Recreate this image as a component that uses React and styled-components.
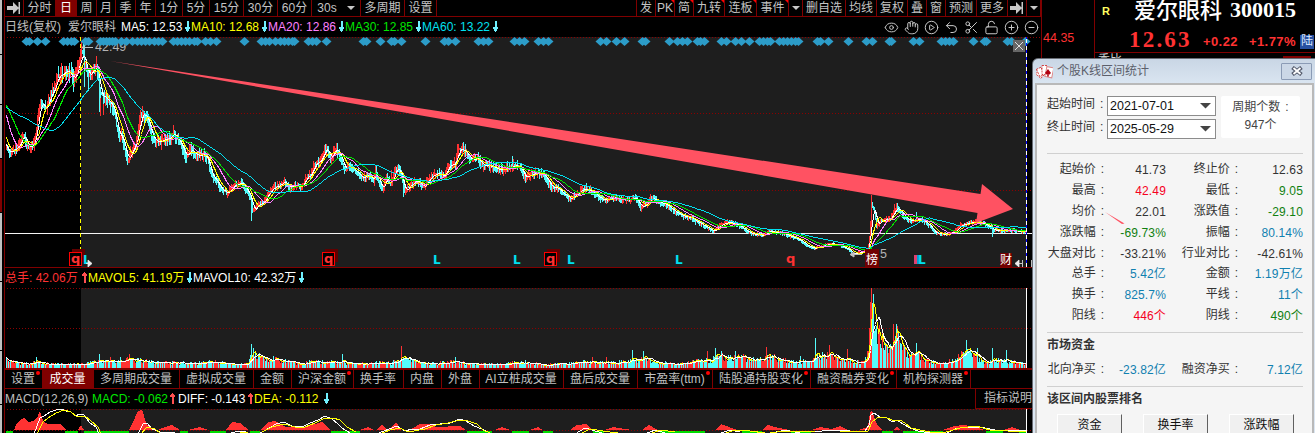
import React from "react";
import styled, {createGlobalStyle} from "styled-components";
import {Eye, Hand, CirclePlay, Undo2, Scissors, LockOpen, CirclePlus, CircleMinus} from "lucide-react";

const GlobalStyle = createGlobalStyle`
* { box-sizing: border-box; }
body {
margin: 0;
background: #000;
font-family: "Liberation Sans", "Noto Sans CJK SC", sans-serif;
font-size: 12px;
overflow: hidden;
}
svg { display: block; flex: none; }
`

const Page = styled.div`
position: relative;
display: flex;
width: 1315px;
height: 433px;
overflow: hidden;
background: #000;
white-space: nowrap;
`

const SideStrip = styled.div`
display: flex;
flex-direction: column;
gap: 1px;
width: 4px;
border-right: 2px solid #000;
`

const SideTab = styled.div`
flex: none;
height: ${props => props.h}px;
background: ${props => props.active ? '#800000' : '#c0c0c0'};
`

const ChartColumn = styled.div`
width: 1038px;
border-left: 1px solid #800000;
border-right: 1px solid #800000;
`

const Toolbar = styled.div`
display: flex;
justify-content: space-between;
height: 17px;
border-bottom: 1px solid #800000;
`

const ToolGroup = styled.div`
display: flex;
`

const ToolButton = styled.div`
position: relative;
display: flex;
align-items: center;
justify-content: center;
width: ${props => props.w}px;
height: 16px;
padding-bottom: 1px;
line-height: 14px;
color: ${props => props.active ? '#fff' : '#c4c4c4'};
background: ${props => props.active ? '#800000' : 'transparent'};
border-right: 1px solid #800000;
&:after {
content: "";
display: ${props => props.mark ? 'block' : 'none'};
position: absolute;
top: 0;
right: 0;
border-top: 3px solid #f00;
border-left: 3px solid transparent;
}
`

const InfoRow = styled.div`
display: flex;
align-items: center;
height: ${props => props.h || 20}px;
color: #c0c0c0;
`

const InfoItem = styled.div`
display: flex;
align-items: center;
flex: none;
width: ${props => props.w}px;
height: 16px;
line-height: 16px;
color: ${props => props.color || '#c0c0c0'};
`

const ArrowSlot = styled.span`
margin-left: auto;
padding-right: ${props => props.gap || 0}px;
`

const IconTools = styled.div`
display: flex;
gap: 5px;
margin-left: auto;
margin-right: 2px;
color: #c8c8c8;
`

const VolumeHead = styled(InfoRow)`
border-top: 1px solid #800000;
`

const IndicatorTabs = styled.div`
display: flex;
height: 21px;
border-top: 2px solid #800000;
border-bottom: 1px solid #800000;
`

const IndicatorTab = styled.div`
position: relative;
display: flex;
align-items: center;
justify-content: center;
width: ${props => props.w}px;
padding-right: 1px;
line-height: 14px;
color: ${props => props.active ? '#fff' : '#c0c0c0'};
background: ${props => props.active ? '#800000' : 'transparent'};
border-right: 1px solid #800000;
&:after {
content: "";
display: ${props => props.dot ? 'block' : 'none'};
position: absolute;
top: 1px;
right: 2px;
width: 4px;
height: 4px;
border-radius: 2px;
background: #f00;
}
`

const HelpButton = styled.div`
width: 66px;
height: 20px;
margin-left: auto;
padding-left: 8px;
line-height: 19px;
border-left: 1px solid #800000;
border-bottom: 1px solid #800000;
`

const PriceAxis = styled.div`
width: 52px;
padding: 31px 0 0 1px;
font-size: 12.5px;
line-height: 14px;
color: #ff3232;
`

const QuotePanel = styled.div`
display: flex;
flex-direction: column;
width: 221px;
border-left: 1px solid #800000;
`

const QuoteTitle = styled.div`
display: flex;
align-items: center;
height: 22px;
padding-left: 7px;
color: #fff;
`

const Flag = styled.span`
width: 32px;
color: #ffff60;
font-size: 11px;
font-weight: bold;
`

const StockName = styled.span`
width: 96px;
font-size: 22px;
font-weight: 500;
line-height: 22px;
`

const StockCode = styled.span`
padding-bottom: 2px;
font: bold 22px/20px "Liberation Serif", serif;
`

const QuoteLine = styled.div`
display: flex;
align-items: center;
height: 31px;
padding: 6px 0 0 34px;
color: #ff3232;
border-bottom: 1px solid #800000;
`

const LastPrice = styled.span`
width: 74px;
font: bold 23px/24px "Liberation Serif", serif;
letter-spacing: 2.2px;
`

const Change = styled.span`
width: ${props => props.w}px;
padding-top: 3px;
font-size: 13px;
font-weight: bold;
letter-spacing: 0.4px;
`

const MarketTag = styled.span`
width: 14px;
height: 14px;
margin-top: 3px;
font-size: 12px;
line-height: 13px;
text-align: center;
color: #dce8ff;
background: #2850a0;
`

const QuoteRow = styled.div`
display: flex;
justify-content: space-between;
align-items: flex-start;
height: 8px;
overflow: hidden;
padding: 0 4px 0 3px;
color: #d0d0d0;
line-height: 14px;
`

const RedBlock = styled.div`
width: 28px;
height: 18px;
margin-top: 3px;
background: #800000;
`

const Dialog = styled.div`
position: absolute;
left: 1032px;
top: 58px;
width: 285px;
height: 380px;
padding: 0 2px 0 2px;
border: 1px solid #686c74;
border-radius: 6px 0 0 0;
background: linear-gradient(#c9d6e5, #dbe6f2 26px, #dbe6f2);
color: #333;
`

const DialogTitle = styled.div`
display: flex;
align-items: center;
height: 24px;
padding-left: 1px;
color: #5c5f6b;
`

const TitleText = styled.span`
margin-left: 4px;
line-height: 16px;
`

const CloseButton = styled.div`
display: flex;
align-items: center;
justify-content: center;
width: 31px;
height: 17px;
margin-left: auto;
margin-right: 2px;
border: 1px solid #8b9bb5;
border-radius: 1px;
background: #cbd7e6;
`

const DialogBody = styled.div`
height: 360px;
width: 279px;
padding: 10px 0 0 10px;
border: 2px solid #b9b9b9;
border-bottom: 0;
background: #f5f5f5;
`

const Section = styled.div`
width: 256px;
height: ${props => props.h}px;
border-bottom: 1px solid #d0d0d0;
`

const PeriodSection = styled(Section)`
display: flex;
align-items: flex-start;
padding-top: 1px;
`

const DateRows = styled.div`
display: flex;
flex-direction: column;
gap: 4px;
`

const DateRow = styled.div`
display: flex;
align-items: center;
height: 19px;
`

const DateLabel = styled.span`
width: 60px;
height: 19px;
line-height: 17px;
`

const DateSelect = styled.div`
display: flex;
align-items: center;
justify-content: space-between;
width: 109px;
height: 20px;
padding: 1px 4px 0 2px;
font-size: 12.5px;
color: #111;
background: #fff;
border: 1px solid #8c8c8c;
`

const PeriodCount = styled.div`
width: 79px;
height: 42px;
margin-left: 5px;
padding-top: 2px;
text-align: center;
line-height: 18px;
color: #444;
background: #fff;
border-radius: 2px;
`

const Colon = styled.span`
margin-left: ${props => props.gap || 5}px;
`

const StatGrid = styled.div`
display: grid;
grid-template-columns: 59px 60px 74px 63px;
grid-auto-rows: 20.9px;
padding-top: ${props => props.top || 0}px;
text-align: right;
`

const StatLabel = styled.span`
padding-right: 2px;
line-height: 17px;
color: #333;
`

const StatValue = styled.span`
line-height: 19px;
letter-spacing: 0.15px;
color: ${props => props.color || '#333'};
`

const SectionTitle = styled.div`
padding-top: ${props => props.top}px;
line-height: 16px;
font-weight: bold;
color: #333;
`

const RankButtons = styled.div`
display: flex;
gap: 21px;
padding: 7px 0 0 10px;
`

const RankButton = styled.div`
width: 65px;
height: 26px;
line-height: 20px;
text-align: center;
color: #111;
background: #f0f0f0;
border-top: 1px solid #fff;
border-left: 1px solid #fff;
border-right: 1px solid #606060;
`

const UP = '#ff3232';
const DOWN = '#54fcfc';

// [x, y] anchors of the closing price, one bar per pixel
const closeAnchors = [
    [-60, 110], [-30, 112], [-22, 86], [-12, 76], [-6, 105], [0, 135], [6, 149], [10, 152], [13, 149], [17, 146], [20, 142], [23, 133],
    [26, 146], [30, 146], [33, 143], [36, 128], [38, 112], [40, 100], [43, 108], [46, 106], [50, 93], [54, 88],
    [57, 76], [62, 74], [66, 68], [70, 74], [73, 80], [76, 72], [80, 55], [82, 53], [85, 66], [88, 75], [92, 69],
    [97, 67], [99, 92], [103, 97], [107, 100], [112, 106], [115, 117], [118, 137], [121, 134], [127, 161], [130, 152],
    [135, 145], [138, 130], [140, 114], [143, 114], [147, 118], [150, 132], [155, 140], [160, 142], [165, 138],
    [170, 137], [173, 133], [178, 139], [182, 148], [185, 157], [190, 149], [195, 155], [203, 154], [207, 158],
    [210, 172], [215, 180], [220, 188], [227, 193], [232, 186], [240, 182], [245, 188], [250, 197], [252, 210],
    [254, 208], [258, 204], [263, 202], [268, 192], [273, 187], [280, 184], [284, 181], [288, 187], [295, 185],
    [300, 187], [305, 178], [310, 175], [314, 163], [320, 161], [324, 148], [327, 150], [330, 158], [335, 148],
    [338, 151], [341, 160], [344, 168], [350, 166], [355, 172], [362, 177], [368, 174], [373, 180], [375, 170],
    [378, 182], [382, 189], [386, 176], [390, 184], [395, 168], [399, 169], [402, 182], [404, 191], [410, 184],
    [416, 180], [423, 187], [430, 176], [438, 173], [443, 176], [448, 165], [455, 162], [457, 151], [462, 149],
    [466, 153], [470, 158], [477, 158], [482, 165], [490, 166], [498, 169], [505, 168], [513, 165], [520, 166],
    [523, 177], [530, 174], [540, 172], [545, 177], [550, 186], [558, 188], [563, 194], [570, 198], [577, 193],
    [583, 188], [590, 190], [600, 198], [605, 200], [612, 197], [620, 199], [630, 200], [635, 196], [640, 207],
    [645, 205], [650, 198], [660, 202], [668, 206], [675, 212], [683, 216], [690, 217], [697, 222], [705, 226],
    [713, 231], [720, 224], [727, 222], [735, 223], [740, 226], [748, 232], [755, 234], [763, 235], [768, 231],
    [780, 232], [790, 236], [800, 240], [808, 246], [814, 248], [820, 246], [830, 243], [840, 245], [848, 249],
    [852, 254], [860, 252], [867, 249], [869, 238], [871, 205], [874, 211], [876, 226], [880, 220], [885, 219],
    [890, 218], [894, 209], [897, 207], [900, 211], [905, 218], [912, 221], [917, 219], [922, 220], [930, 226],
    [935, 233], [945, 234], [953, 232], [960, 225], [967, 223], [975, 221], [983, 223], [990, 227], [993, 230],
    [1000, 230], [1010, 230], [1018, 231], [1026, 232],
];

const volumeAnchors = [
    [6, 8], [12, 6], [20, 5], [30, 4], [36, 7], [45, 4], [80, 4], [90, 5], [100, 7], [115, 6], [127, 10], [140, 7],
    [165, 5], [185, 5], [205, 5], [215, 7], [228, 4], [248, 5], [252, 15], [262, 10], [285, 7], [300, 4], [310, 6],
    [350, 5], [390, 5], [403, 9], [415, 7], [425, 4], [450, 6], [475, 4], [500, 4], [525, 6], [545, 3], [570, 5],
    [590, 6], [610, 5], [630, 7], [645, 9], [660, 5], [680, 4], [690, 7], [712, 8], [717, 16], [725, 9], [740, 11],
    [755, 7], [768, 12], [785, 7], [795, 6], [810, 7], [818, 13], [828, 12], [840, 8], [848, 7], [860, 6], [866, 8],
    [868, 22], [871, 70], [873, 56], [876, 34], [881, 30], [886, 21], [891, 20], [896, 36], [902, 20], [910, 12],
    [918, 12], [930, 6], [945, 5], [955, 9], [965, 14], [972, 13], [982, 6], [1000, 7], [1012, 6], [1026, 4],
];

const volumeSpikes = {
    36: 11, 99: 14, 110: 11, 129: 14, 251: 24, 253: 20, 342: 14, 401: 22, 455: 11, 592: 11, 606: 11, 632: 18,
    643: 17, 707: 17, 715: 20, 735: 17, 766: 21, 800: 12, 815: 30, 829: 23, 847: 19, 870: 66, 871: 80, 872: 65,
    893: 44, 896: 44, 899: 28, 916: 25, 966: 28, 977: 20, 992: 20, 1006: 18,
};

function createRandom(seed) {
    let state = seed;
    return () => {
        state = (state * 1664525 + 1013904223) % 4294967296;
        return state / 4294967296;
    };
}

function sample(anchors, x) {
    for (let i = 1; i < anchors.length; i++) {
        const [x1, y1] = anchors[i - 1];
        const [x2, y2] = anchors[i];
        if (x <= x2) return y1 + (y2 - y1) * Math.max(0, x - x1) / (x2 - x1);
    }
    return anchors[anchors.length - 1][1];
}

function average(values, index, size) {
    const part = values.slice(Math.max(0, index - size + 1), index + 1);
    return part.reduce((a, b) => a + b, 0) / part.length;
}

function toPath(points) {
    return "M" + points.map(([x, y]) => x + " " + (Math.round(y) + 0.5)).join("L");
}

const START = -60;
const random = createRandom(77);
const closes = [];
for (let x = START; x <= 1026; x++) {
    const y = sample(closeAnchors, x);
    closes.push(y + (random() - 0.5) * (270 - y) * 0.028);
}

const candles = {up: "", down: ""};
for (let x = 6; x <= 1026; x++) {
    const close = closes[x - START];
    const open = closes[x - START - 1];
    const reach = (270 - close) * 0.05;
    const top = Math.round(Math.min(open, close) - random() * reach);
    const bottom = Math.round(Math.max(open, close) + random() * reach) + 1;
    candles[close < open ? "up" : "down"] += `M${x + 0.5} ${top}V${bottom}`;
}
candles.down += "M88.5 70V91M84.5 60V87M99.5 85V112M251.5 195V221M403.5 180V197M512.5 156V166M586.5 183V190M992.5 225V237M897.5 203V212M916.5 212V219";
candles.up += "M100.5 90V116M103.5 92V115M127.5 150V165M140.5 111V125M871.5 195V236M894.5 204V214M896.5 203V210M391.5 170V185";

function movingLine(values, size, from) {
    const points = [];
    for (let x = 6; x <= 1026; x++) points.push([x + 0.5, average(values, x - from, size)]);
    return toPath(points);
}

const volumes = [];
const volumeBars = {up: "", down: ""};
for (let x = 6; x <= 1026; x++) {
    const h = volumeSpikes[x] || sample(volumeAnchors, x) * (0.65 + random() * 0.75);
    volumes.push(368 - h);
    const rising = (x >= 867 && x <= 871) || (!(x > 871 && x < 877) && random() < 0.46);
    volumeBars[rising ? "up" : "down"] += `M${x + 0.5} 368V${Math.round(368 - h)}`;
}

const diamonds = [
    26, 29, 37, 45, 63, 67, 71, 74, 85, 88, 100, 103, 106, 109, 112, 115, 121, 126, 132, 137, 141, 145, 149, 154,
    158, 162, 173, 177, 181, 185, 189, 194, 197, 205, 210, 216, 244, 261, 265, 269, 275, 280, 284, 288, 292, 294,
    308, 312, 316, 326, 363, 366, 380, 391, 394, 401, 425, 444, 448, 455, 478, 483, 488, 514, 519, 524, 538, 543,
    548, 600, 606, 616, 624, 642, 645, 669, 677, 682, 687, 697, 700, 704, 721, 726, 735, 741, 749, 759, 763, 767,
    770, 779, 783, 787, 791, 795, 798, 817, 820, 828, 848, 866, 872, 889, 891, 913, 919, 941, 945, 949, 953, 973,
    984, 986, 1007, 1011, 1025,
];

const macdMounds = [
    "M14 430L17 423L20 420L24 418L28 422L33 421L37 418L40 411L43 421L48 424L60 424L67 430Z",
    "M78 430L81 425L84 430Z",
    "M129 430L133 422L138 411L141 410L143 412L146 423L152 430Z",
    "M158 430L165 427L172 425L180 430Z", "M188 430L200 427L208 430Z",
    "M226 430L232 422L240 423L249 430Z", "M260 430L268 422L275 421L286 427L305 427L315 424L322 422L330 430Z",
    "M360 430L368 427L374 430Z", "M376 430L382 425L387 430Z", "M389 430L396 422L401 430Z",
    "M410 430L420 424L431 424L436 427L460 426L466 430Z",
    "M495 430L502 427L510 430Z", "M530 430L538 427L543 430Z",
    "M570 430L577 425L586 424L593 430Z", "M605 430L613 427L625 429L632 430Z", "M642 430L649 425L658 430Z",
    "M715 430L721 424L729 427L737 430Z", "M762 430L768 425L779 428L790 430Z",
    "M812 430L820 427L832 429L840 426L848 430Z", "M858 430L868 427L870 412L872 410L874 417L877 424L882 430Z",
    "M893 430L897 427L901 430Z", "M943 430L954 426L964 425L975 427L984 430Z", "M1003 430L1012 427L1020 430Z",
];

const macdGreens = [
    [6, 13], [65, 78], [84, 129], [180, 188], [210, 226], [250, 260], [331, 360], [467, 492], [512, 529],
    [543, 553], [593, 604], [660, 705], [742, 762], [791, 811], [882, 893], [903, 943], [986, 1003], [1019, 1026],
];

const diffLine = "M34 434L40 418L44 416L50 412L56 410L62 409L66 411L71 412L75 416L80 414L84 415L90 423L96 427L99 434"
    + "M138 434L143 424L147 423L152 429L160 432L190 434M228 434L238 431L244 431L250 434M258 434L266 430L276 424L284 422L292 426L302 427L310 423L318 420L325 416L332 419L338 424L342 428L350 433"
    + "M376 434L384 431L397 426L405 431L412 429L420 429L430 425L440 424L450 423L460 419L466 421L474 426L482 429L490 433"
    + "M575 434L585 428L592 430L602 433M645 434L655 430L665 433M718 434L730 430L740 432M768 434L785 430L800 433"
    + "M810 432L835 430L850 431L865 431L869 425L871 415L874 413L880 417L886 417L892 422L897 420L903 424L910 428L918 431L930 433L945 434L955 429L965 427L985 428L1000 431L1012 430L1026 431";

const deaLine = "M37 434L43 422L48 418L56 413L64 410L71 412L77 417L85 416L91 421L98 427L101 434"
    + "M141 434L147 427L155 429L160 433M233 434L248 432M262 432L272 427L284 424L295 427L305 427L315 423L325 418L333 418L340 420L347 427L356 432"
    + "M380 434L390 430L400 428L408 432L425 429L436 425L448 423L460 420L468 421L477 424L483 430L490 433"
    + "M580 434L590 429L603 431L625 434M650 434L660 430L675 432M723 434L735 430L750 431L765 433M770 433L785 431L815 432"
    + "M840 431L868 431L872 422L877 418L885 417L894 421L900 420L905 423L911 428L920 430L930 432L943 433L960 428L976 426L990 430L1008 431L1026 431";

const boxedMarks = [69, 322, 544];
const dividendMarks = [83, 433, 513, 567, 675, 918];

const Arrow = ({up, gap}) => (
    <ArrowSlot gap={gap}>
        <svg width="7" height="12" viewBox="0 0 7 12" shapeRendering="crispEdges">
            {up ? <path d="M3 0h1v1h1v1h1v2H4.5v7h-2v-7H1V2h1V1h1z" fill="#ff5050"/>
                : <path d="M2.5 0h2v6H6v2H5v2H4v1H3v-1H2V8H1V6h1.5z" fill="#70f0ff"/>}
        </svg>
    </ArrowSlot>
)

const JumpIcon = () => (
    <svg width="14" height="12" viewBox="0 0 14 12">
        <path d="M0 4h6V0l6 6-6 6V8H0zM11.500 0h1.500v12h-1.500z" fill="#c8c8c8"/>
    </svg>
)

const Caret = ({color = "#c8c8c8", size = 8}) => (
    <svg width={size} height={size / 2} viewBox="0 0 8 4">
        <path d="M0 0h8L4 4z" fill={color}/>
    </svg>
)

const GridLine = ({y}) => (
    <path d={`M7 ${y}.5H1041`} stroke="#8c0000" strokeDasharray="1 2" shapeRendering="crispEdges"/>
)

const PriceChart = () => (
    <svg width="1036" height="230" viewBox="5 37 1036 230" fontFamily='"Liberation Sans", "Noto Sans CJK SC", sans-serif'>
        <rect x="81" y="37" width="946" height="230" fill="#1e1e1e"/>
        <GridLine y={37}/>
        <GridLine y={113}/>
        <GridLine y={190}/>
        <path d="M5 233.500H1041" stroke="#f4f4f4" shapeRendering="crispEdges"/>
        <path d="M80.500 37V267" stroke="#ffff00" strokeDasharray="4 3" shapeRendering="crispEdges"/>
        <g fill="none" shapeRendering="crispEdges">
            <path d={candles.up} stroke={UP}/>
            <path d={candles.down} stroke={DOWN}/>
            <path d={movingLine(closes, 5, START)} stroke="#fff"/>
            <path d={movingLine(closes, 10, START)} stroke="#ffff00"/>
            <path d={movingLine(closes, 20, START)} stroke="#ff80ff"/>
            <path d={movingLine(closes, 30, START)} stroke="#00e600"/>
            <path d={movingLine(closes, 60, START)} stroke="#00e0f0"/>
        </g>
        <text x="95" y="51" fontSize="12.500" fill="#b4b4b4">42.49</text>
        <path d="M82 47.500H93M85 45l-3 2.500 3 2.500" stroke="#c0c0c0" fill="none"/>
        <g fill="#2c9cc8">
            {diamonds.map(x => <path key={x} d={`M${x + 0.5} 37l5 4.500-5 4.500-5-4.500z`}/>)}
        </g>
        {boxedMarks.map(x => (
            <g key={x}>
                <rect x={x + 3} y="249" width="13" height="13" fill="#600000"/>
                <rect x={x + 0.5} y="252.500" width="12" height="13" fill="#000" stroke="#ff0000"/>
                <text x={x + 2} y="263" fontSize="13" fontWeight="bold" fill={UP} fontFamily="DejaVu Sans">q</text>
            </g>
        ))}
        <text x="786" y="263" fontSize="13" fontWeight="bold" fill={UP} fontFamily="DejaVu Sans">q</text>
        <rect x="914" y="255" width="3" height="9" fill="#e04070"/>
        <rect x="917" y="255" width="2" height="9" fill="#00a0d0"/>
        {dividendMarks.map(x => (
            <text key={x} x={x} y="264" fontSize="12" fontWeight="bold" fill="#00e0f0" fontFamily="DejaVu Sans">L</text>
        ))}
        <path d="M86 263.500h3M88 260v7l4-3.500zM1022 263.500h-5M1019 260v7l-4-3.500zM1022.500 260v7M1031.500 260v7" fill="#eee" stroke="#eee" strokeWidth="0.8"/>
        <path d="M862 254.500H851M854 252v5l-4-2.500z" stroke="#c0c0c0" fill="#c0c0c0"/>
        <text x="880" y="258" fontSize="12.500" fill="#b4b4b4">5</text>
        <rect x="865" y="249" width="14" height="18" fill="#700000"/>
        <text x="866" y="264" fontSize="12" fill="#fff">榜</text>
        <rect x="1000" y="253" width="12" height="14" fill="#700000"/>
        <text x="1000" y="264" fontSize="12" fill="#fff">财</text>
        <path d="M1026.500 37V267" stroke="#0000ff" shapeRendering="crispEdges"/>
        <path d="M1026.500 39V267" stroke="#fff" strokeDasharray="4 3" shapeRendering="crispEdges"/>
        <rect x="1013" y="40" width="12" height="12" fill="#666"/>
        <path d="M1015 42l8 8M1023 42l-8 8" stroke="#e0e0e0"/>
        <path d="M110 61L980.500 194L982 184L1013 209L976 223L977.500 213Z" fill="#ff5262"/>
    </svg>
)

const VolumeChart = () => (
    <svg width="1036" height="80" viewBox="5 288 1036 80">
        <rect x="81" y="288" width="946" height="80" fill="#1e1e1e"/>
        <GridLine y={288}/>
        <GridLine y={328}/>
        <g fill="none" shapeRendering="crispEdges">
            <path d={volumeBars.up} stroke={UP}/>
            <path d={volumeBars.down} stroke={DOWN}/>
            <path d={movingLine(volumes, 5, 6)} stroke="#ffff00"/>
            <path d={movingLine(volumes, 10, 6)} stroke="#fff"/>
            <path d="M1026.500 288V368" stroke="#fff"/>
        </g>
    </svg>
)

const MacdChart = () => (
    <svg width="1036" height="24" viewBox="5 409 1036 24">
        <rect x="81" y="409" width="946" height="24" fill="#1e1e1e"/>
        <GridLine y={409}/>
        <GridLine y={430}/>
        <g shapeRendering="crispEdges">
            {macdMounds.map(d => <path key={d} d={d} fill={UP}/>)}
            {macdGreens.map(([from, to]) => <rect key={from} x={from} y="431" width={to - from} height="2" fill="#00dc00"/>)}
            <path d={diffLine} stroke="#fff" fill="none"/>
            <path d={deaLine} stroke="#ffff00" fill="none"/>
            <path d="M1026.500 409V433" stroke="#fff"/>
        </g>
    </svg>
)

const leftTools = [
    ["分时", 32], ["日", 21, true], ["周", 20], ["月", 19], ["季", 20], ["年", 20], ["1分", 27], ["5分", 27],
    ["15分", 34], ["30分", 34], ["60分", 34],
];

const rightTools = [
    ["发", 19], ["PK", 19, true], ["简", 19, true], ["九转", 31, true], ["连板", 32, true], ["事件", 32, true],
];

const moreTools = [["删自选", 43], ["均线", 31], ["复权", 31], ["叠", 19], ["窗", 19], ["预测", 31], ["更多", 31]];

const tabs = [
    {name: "设置", w: 38, dot: true}, {name: "成交量", w: 51, active: true}, {name: "多周期成交量", w: 86},
    {name: "虚拟成交量", w: 74}, {name: "金额", w: 38}, {name: "沪深金额", w: 62, dot: true}, {name: "换手率", w: 50},
    {name: "内盘", w: 38}, {name: "外盘", w: 38}, {name: "AI立桩成交量", w: 84}, {name: "盘后成交量", w: 74},
    {name: "市盈率(ttm)", w: 75, dot: true}, {name: "陆股通持股变化", w: 98, dot: true},
    {name: "融资融券变化", w: 86, dot: true}, {name: "机构探测器", w: 74, dot: true},
];

const RED = '#f5001e';
const GREEN = '#108010';
const BLUE = '#1080b0';

const stats = [
    ["起始价", "41.73"], ["终止价", "12.63"],
    ["最高", "42.49", RED], ["最低", "9.05", GREEN],
    ["均价", "22.01"], ["涨跌值", "-29.10", GREEN],
    ["涨跌幅", "-69.73%", GREEN], ["振幅", "80.14%", BLUE],
    ["大盘对比", "-33.21%"], ["行业对比", "-42.61%"],
    ["总手", "5.42亿", BLUE], ["金额", "1.19万亿", BLUE],
    ["换手", "825.7%", BLUE], ["平线", "11个", BLUE],
    ["阳线", "446个", RED], ["阴线", "490个", GREEN],
];

const Stat = ({label, value, color}) => (
    <>
        <StatLabel>{label}<Colon>:</Colon></StatLabel>
        <StatValue color={color}>{value}</StatValue>
    </>
)

const StatsDialog = () => (
    <Dialog>
        <DialogTitle>
            <svg width="17" height="15" viewBox="0 0 17 15">
                <g fill="#fff" stroke="#d02020" strokeWidth="0.8" strokeDasharray="2 1">
                    <rect x="2" y="5" width="5" height="7" transform="rotate(-50 6 10)"/>
                    <rect x="3" y="3" width="5" height="8" transform="rotate(-25 7 10)"/>
                    <rect x="6" y="1.500" width="5" height="9"/>
                </g>
                <rect x="9" y="3" width="7" height="10" transform="rotate(12 12 12)" fill="#fff" stroke="#d88"/>
                <path d="M12 5l3 4-1.500 1.500h-1l.5 2h-2l.5-2h-1L9 9z" fill="#b00010"/>
            </svg>
            <TitleText>个股K线区间统计</TitleText>
            <CloseButton>
                <svg width="12" height="10" viewBox="0 0 12 10">
                    <path d="M1.500 1.500l9 7M10.500 1.500l-9 7" stroke="#555b6c" strokeWidth="4"/>
                    <path d="M2.500 2l7 6M9.500 2l-7 6" stroke="#fff" strokeWidth="1.800"/>
                </svg>
            </CloseButton>
        </DialogTitle>
        <DialogBody>
            <PeriodSection h={59}>
                <DateRows>
                    <DateRow>
                        <DateLabel>起始时间<Colon>:</Colon></DateLabel>
                        <DateSelect>2021-07-01<Caret color="#444" size={11}/></DateSelect>
                    </DateRow>
                    <DateRow>
                        <DateLabel>终止时间<Colon>:</Colon></DateLabel>
                        <DateSelect>2025-05-29<Caret color="#444" size={11}/></DateSelect>
                    </DateRow>
                </DateRows>
                <PeriodCount>周期个数<Colon>:</Colon><br/>947个</PeriodCount>
            </PeriodSection>
            <Section h={179}>
                <StatGrid top={7}>
                    {stats.map(([label, value, color]) => <Stat key={label} label={label} value={value} color={color}/>)}
                </StatGrid>
            </Section>
            <Section h={54}>
                <SectionTitle top={4}>市场资金</SectionTitle>
                <StatGrid top={8}>
                    <Stat label="北向净买" value="-23.82亿" color={BLUE}/>
                    <Stat label="融资净买" value="7.12亿" color={BLUE}/>
                </StatGrid>
            </Section>
            <SectionTitle top={4}>该区间内股票排名</SectionTitle>
            <RankButtons>
                <RankButton>资金</RankButton>
                <RankButton>换手率</RankButton>
                <RankButton>涨跌幅</RankButton>
            </RankButtons>
        </DialogBody>
        <TrendMark width="20" height="13" viewBox="0 0 20 13">
            <path d="M0 0L19.500 11.500L17 12Z" fill="#ff5262"/>
        </TrendMark>
    </Dialog>
)

// small pen stroke lying over the average price row
const TrendMark = styled.svg`
position: absolute;
left: 72px;
top: 153px;
`

const App = () => {
    const toolIcons = [Eye, Hand, CirclePlay, Undo2, Scissors, LockOpen, CirclePlus, CircleMinus];

    return (
        <Page>
            <GlobalStyle/>
            <SideStrip>
                <SideTab h={54}/>
                <SideTab h={49}/>
                <SideTab h={53}/>
                <SideTab h={53} active/>
                <SideTab h={68}/>
                <SideTab h={68}/>
                <SideTab h={53}/>
                <SideTab h={40}/>
            </SideStrip>
            <ChartColumn>
                <Toolbar>
                    <ToolGroup>
                        <ToolButton w={19}><JumpIcon/></ToolButton>
                        {leftTools.map(([name, w, active]) => (
                            <ToolButton key={name} w={w} active={active}>{name}</ToolButton>
                        ))}
                        <ToolButton w={49}>30s&nbsp;&nbsp;&nbsp;<Caret/></ToolButton>
                        <ToolButton w={44}>多周期</ToolButton>
                        <ToolButton w={32}>设置</ToolButton>
                    </ToolGroup>
                    <ToolGroup>
                        <ToolButton w={1}/>
                        {rightTools.map(([name, w, mark]) => (
                            <ToolButton key={name} w={w} mark={mark}>{name}</ToolButton>
                        ))}
                        <ToolButton w={14}><Caret/></ToolButton>
                        {moreTools.map(([name, w]) => <ToolButton key={name} w={w}>{name}</ToolButton>)}
                        <ToolButton w={19}><JumpIcon/></ToolButton>
                        <ToolButton w={14}><Caret/></ToolButton>
                    </ToolGroup>
                </Toolbar>
                <InfoRow>
                    <InfoItem w={63}>日线(复权)</InfoItem>
                    <InfoItem w={53}>爱尔眼科</InfoItem>
                    <InfoItem w={70} color="#fff">MA5: 12.53<Arrow/></InfoItem>
                    <InfoItem w={77} color="#ffff00">MA10: 12.68<Arrow/></InfoItem>
                    <InfoItem w={77} color="#ff80ff">MA20: 12.86<Arrow/></InfoItem>
                    <InfoItem w={77} color="#00e600">MA30: 12.85<Arrow/></InfoItem>
                    <InfoItem w={77} color="#00e0f0">MA60: 13.22<Arrow/></InfoItem>
                    <IconTools>
                        {toolIcons.map((Icon, i) => <Icon key={i} size={15} strokeWidth={1.6}/>)}
                    </IconTools>
                </InfoRow>
                <PriceChart/>
                <VolumeHead h={21}>
                    <InfoItem w={83} color={UP}>总手: 42.06万<Arrow up/></InfoItem>
                    <InfoItem w={105} color="#ffff00">MAVOL5: 41.19万<Arrow/></InfoItem>
                    <InfoItem w={112} color="#fff">MAVOL10: 42.32万<Arrow/></InfoItem>
                </VolumeHead>
                <VolumeChart/>
                <IndicatorTabs>
                    {tabs.map(({name, ...tab}) => <IndicatorTab key={name} {...tab}>{name}</IndicatorTab>)}
                </IndicatorTabs>
                <InfoRow>
                    <InfoItem w={87}>MACD(12,26,9)</InfoItem>
                    <InfoItem w={86} color="#00e600">MACD: -0.062<Arrow up gap={2}/></InfoItem>
                    <InfoItem w={76} color="#fff">DIFF: -0.143<Arrow up/></InfoItem>
                    <InfoItem w={76} color="#ffff00">DEA: -0.112<Arrow/></InfoItem>
                    <HelpButton>指标说明</HelpButton>
                </InfoRow>
                <MacdChart/>
            </ChartColumn>
            <PriceAxis>44.35</PriceAxis>
            <QuotePanel>
                <QuoteTitle>
                    <Flag>R</Flag>
                    <StockName>爱尔眼科</StockName>
                    <StockCode>300015</StockCode>
                </QuoteTitle>
                <QuoteLine>
                    <LastPrice>12.63</LastPrice>
                    <Change w={46}>+0.22</Change>
                    <Change w={51}>+1.77%</Change>
                    <MarketTag>陆</MarketTag>
                </QuoteLine>
                <QuoteRow>
                    <span>委比</span>
                    <RedBlock/>
                </QuoteRow>
            </QuotePanel>
            <StatsDialog/>
        </Page>
    )
}

export default App;
